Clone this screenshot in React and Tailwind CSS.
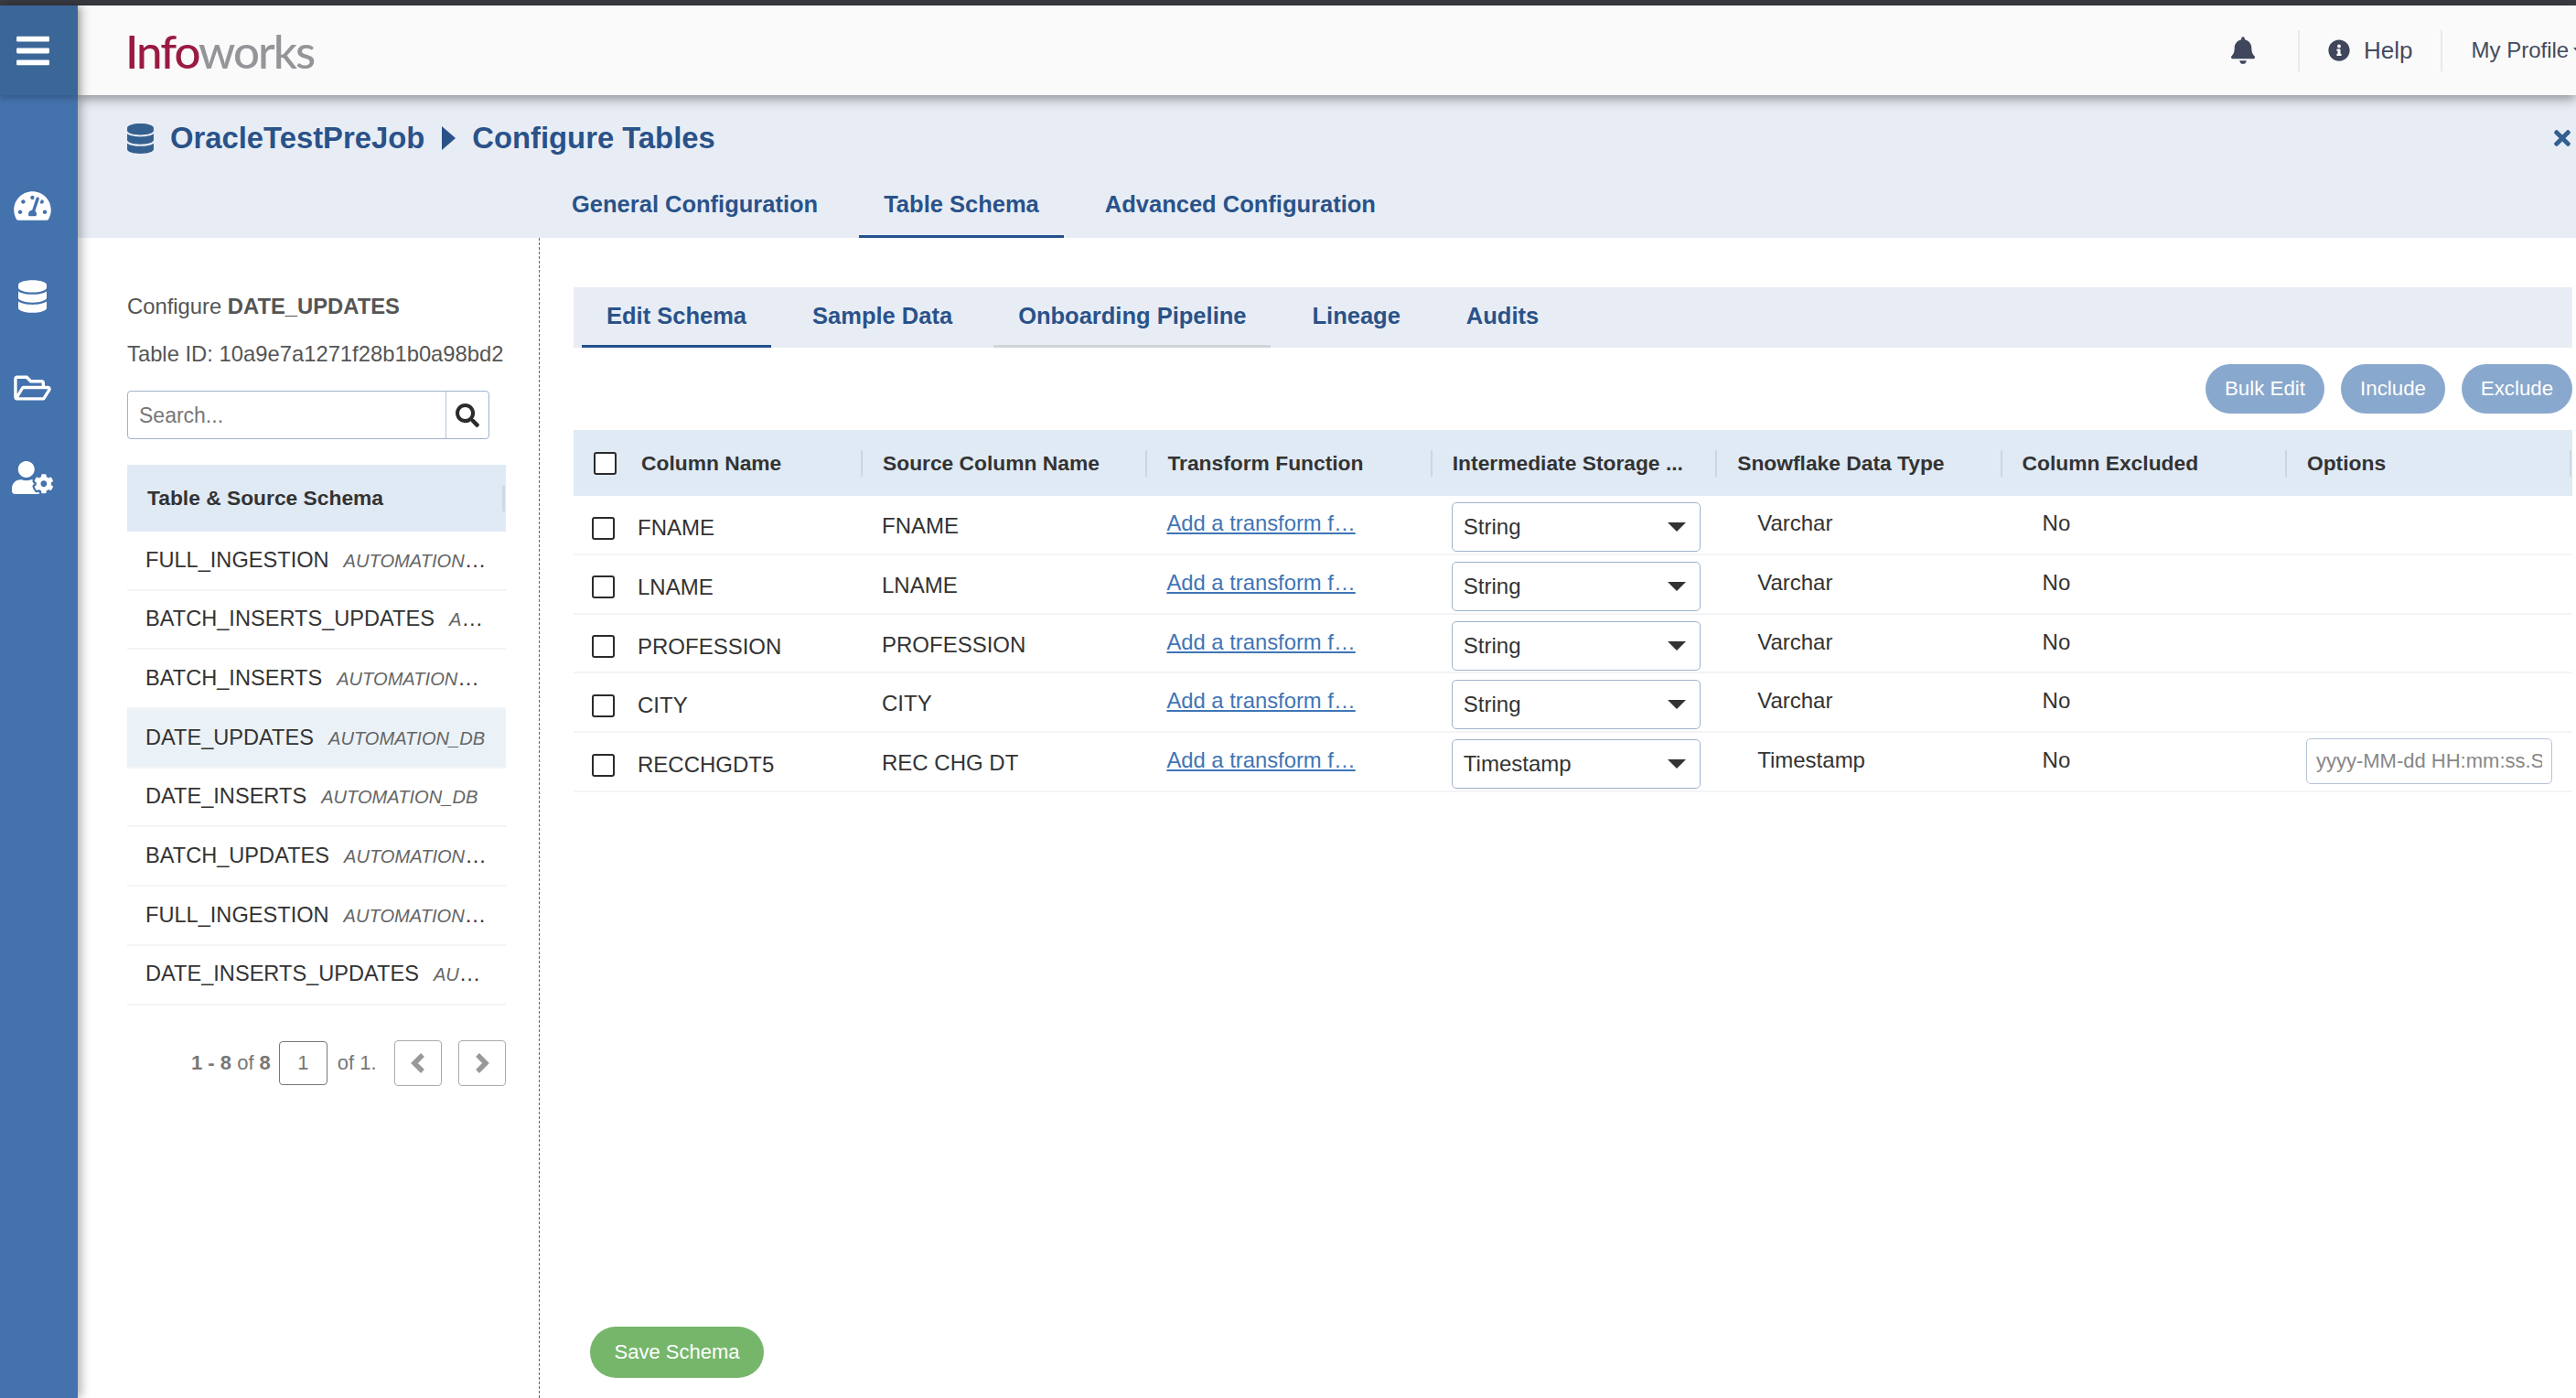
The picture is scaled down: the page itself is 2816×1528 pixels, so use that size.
import { FaBars, FaBell, FaDatabase, FaInfoCircle, FaRegFolderOpen, FaSearch, FaTachometerAlt, FaTimes, FaUserCog } from 'react-icons/fa';

const tables = [
  ['FULL_INGESTION'],
  ['BATCH_INSERTS_UPDATES'],
  ['BATCH_INSERTS'],
  ['DATE_UPDATES', true],
  ['DATE_INSERTS'],
  ['BATCH_UPDATES'],
  ['FULL_INGESTION'],
  ['DATE_INSERTS_UPDATES'],
];

const columns = ['Source Column Name', 'Transform Function', 'Intermediate Storage ...', 'Snowflake Data Type', 'Column Excluded', 'Options'];

const rows = [
  { name: 'FNAME', source: 'FNAME', storage: 'String', type: 'Varchar' },
  { name: 'LNAME', source: 'LNAME', storage: 'String', type: 'Varchar' },
  { name: 'PROFESSION', source: 'PROFESSION', storage: 'String', type: 'Varchar' },
  { name: 'CITY', source: 'CITY', storage: 'String', type: 'Varchar' },
  { name: 'RECCHGDT5', source: 'REC CHG DT', storage: 'Timestamp', type: 'Timestamp', options: true },
];

function Checkbox() {
  return <input type="checkbox" className="h-[25px] w-[25px] shrink-0 appearance-none rounded-[3px] border-2 border-[#2b2b2b] bg-white" />;
}

function PillButton({ children, className = '' }) {
  return (
    <button type="button" className={`flex h-[54px] items-center justify-center rounded-full bg-[#89a8cd] text-[22.3px] text-white ${className}`}>
      {children}
    </button>
  );
}

function PageTab({ children, active = false, muted = false }) {
  const line = active ? 'border-[#24508c]' : muted ? 'border-[#d0d3d8]' : 'border-transparent';
  return (
    <div className={`flex h-full items-center whitespace-nowrap border-b-[3px] px-[27px] pb-[1px] text-[25.5px] font-bold text-[#2a5289] ${line}`}>
      {children}
    </div>
  );
}

function PagerButton({ points }) {
  return (
    <div className="flex h-[50px] w-[52px] items-center justify-center rounded-[4px] border border-[#aaa]">
      <svg viewBox="0 0 16 24" className="h-[24px] w-[16px]">
        <polyline points={points} fill="none" stroke="#999" strokeWidth="5.5" />
      </svg>
    </div>
  );
}

function Sidebar() {
  return (
    <aside className="relative z-20 flex w-[85px] shrink-0 flex-col bg-[#4472ad] text-white shadow-[4px_0_10px_rgba(0,0,0,0.3)]">
      <div className="flex h-[98px] w-full items-center justify-center bg-[#3b6698] pr-[14px] shadow-[0_4px_6px_rgba(0,0,0,0.2)]">
        <FaBars className="h-[41px] w-[36px]" />
      </div>
      <div className="flex flex-col items-center pr-[14px]">
        <FaTachometerAlt className="mt-[103px] h-[36px] w-[41px]" />
        <FaDatabase className="mt-[63px] h-[36px] w-[31px]" />
        <FaRegFolderOpen className="mt-[64px] h-[36px] w-[41px]" />
        <FaUserCog className="mt-[62px] h-[36px] w-[45px]" />
      </div>
    </aside>
  );
}

function Header() {
  return (
    <header className="relative z-10 flex h-[98px] items-center bg-[#fafafa] shadow-[0_4px_12px_rgba(0,0,0,0.4)]">
      <div className="ml-[52px] font-['Lato',sans-serif] text-[51px] font-medium leading-none tracking-[-2px]">
        <span className="text-[#9a1b42]">Info</span>
        <span className="text-[#939598]">works</span>
      </div>
      <div className="flex-1" />
      <div className="flex w-[377px] shrink-0 items-center overflow-hidden text-[26px] text-[#444b5c]">
        <FaBell className="h-[30px] w-[26px] shrink-0 text-[#40465c]" />
        <div className="ml-[47px] h-[45px] w-[2px] shrink-0 bg-[#e8e8ee]" />
        <FaInfoCircle className="ml-[31px] h-[24px] w-[24px] shrink-0 text-[#40465c]" />
        <span className="ml-[15px] shrink-0">Help</span>
        <div className="ml-[31px] h-[45px] w-[2px] shrink-0 bg-[#e8e8ee]" />
        <span className="ml-[31px] shrink-0 whitespace-nowrap text-[24px]">My Profile</span>
        <svg viewBox="0 0 12 7" className="ml-[5px] h-[7px] w-[12px] shrink-0">
          <polygon points="0,0 12,0 6,7" fill="#444b5c" />
        </svg>
      </div>
    </header>
  );
}

function TableList() {
  return (
    <aside className="flex w-[505px] shrink-0 flex-col border-r border-dashed border-[#3f6c9e] pl-[54px] pr-[36px]">
      <div className="mt-[60px] text-[23.8px] leading-[30px] text-[#555]">
        Configure <b>DATE_UPDATES</b>
      </div>
      <div className="mt-[22px] whitespace-nowrap text-[23.8px] leading-[30px] text-[#555]">Table ID: 10a9e7a1271f28b1b0a98bd2</div>
      <div className="mt-[25px] flex h-[53px] w-[396px] rounded-[4px] border border-[#9fb3cc]">
        <input placeholder="Search..." className="min-w-0 flex-1 bg-transparent pl-[12px] pt-[2px] text-[23px] outline-none placeholder:text-[#777]" />
        <div className="flex w-[47px] items-center justify-center border-l border-[#b7c4d6]">
          <FaSearch className="h-[26px] w-[26px] text-[#2b2b2b]" />
        </div>
      </div>
      <div className="mt-[28px] flex h-[73px] items-center justify-between bg-[#e0eaf5] pl-[22px] pr-[1px] text-[22.8px] font-bold text-[#333]">
        Table &amp; Source Schema
        <div className="h-[28px] w-[3px] bg-[#cfd9e4]" />
      </div>
      {tables.map(([name, active], i) => (
        <div key={i} className={`flex h-[64.7px] items-center border-b-2 border-[#f3f4f6] pl-[20px] ${active ? 'bg-[#ebf2f7]' : ''}`}>
          <div className="w-[376px] truncate text-[23.6px] text-[#333]">
            {name}
            <i className="ml-[16px] text-[20.1px] text-[#666]">AUTOMATION_DB</i>
          </div>
        </div>
      ))}
      <div className="mt-[38px] flex items-center pl-[70px] text-[22px] text-[#777]">
        <span className="whitespace-nowrap">
          <b>1 - 8</b> of <b>8</b>
        </span>
        <div className="ml-[9px] flex h-[48px] w-[53px] items-center justify-center rounded-[4px] border border-[#777]">1</div>
        <span className="ml-[11px] whitespace-nowrap">of 1.</span>
        <div className="ml-[19px]">
          <PagerButton points="13,3 4,12 13,21" />
        </div>
        <div className="ml-[18px]">
          <PagerButton points="3,3 12,12 3,21" />
        </div>
      </div>
    </aside>
  );
}

function SchemaRow({ row }) {
  return (
    <div className="grid h-[64.8px] grid-cols-[316px_repeat(6,311.4px)] items-start border-b-2 border-[#f3f4f6] text-[24px] leading-[30px] text-[#333]">
      <div className="flex items-center pl-[20px] pt-[20px]">
        <Checkbox />
        <span className="ml-[25px]">{row.name}</span>
      </div>
      <div className="pl-[21px] pt-[18px]">{row.source}</div>
      <div className="pl-[21px] pt-[15px]">
        <a href="#" className="text-[23.8px] text-[#3f75b5] underline">
          Add a transform f…
        </a>
      </div>
      <div className="pl-[21px] pt-[7px]">
        <div className="flex h-[54px] w-[272px] items-center justify-between rounded-[5px] border border-[#9fb3cc] pl-[12px] pr-[15px]">
          {row.storage}
          <svg viewBox="0 0 20 10" className="h-[10px] w-[20px]">
            <polygon points="0,0 20,0 10,10" fill="#333" />
          </svg>
        </div>
      </div>
      <div className="pl-[44px] pt-[15px]">{row.type}</div>
      <div className="pl-[44px] pt-[15px]">No</div>
      <div className="pl-[21px] pt-[6px]">
        {row.options && (
          <input
            placeholder="yyyy-MM-dd HH:mm:ss.SSS"
            className="h-[50px] w-[269px] rounded-[5px] border border-[#b7c4d6] px-[10px] text-[22px] outline-none placeholder:text-[#888]"
          />
        )}
      </div>
    </div>
  );
}

function SchemaPanel() {
  return (
    <section className="flex min-w-0 flex-1 flex-col pl-[37px] pr-[4px]">
      <div className="mt-[54px] flex h-[66px] gap-[18px] bg-[#e8edf5] pl-[9px]">
        <PageTab active>Edit Schema</PageTab>
        <PageTab>Sample Data</PageTab>
        <PageTab muted>Onboarding Pipeline</PageTab>
        <PageTab>Lineage</PageTab>
        <PageTab>Audits</PageTab>
      </div>
      <div className="mt-[18px] flex justify-end gap-[18px]">
        <PillButton className="w-[130px]">Bulk Edit</PillButton>
        <PillButton className="w-[114px]">Include</PillButton>
        <PillButton className="w-[121px]">Exclude</PillButton>
      </div>
      <div className="mt-[18px] grid h-[72px] grid-cols-[316px_repeat(6,311.4px)] items-center bg-[#e0eaf5] text-[22.8px] font-bold text-[#333]">
        <div className="flex h-[29px] items-center border-r-2 border-[#ccd6e2] pl-[22px]">
          <Checkbox />
          <span className="ml-[27px]">Column Name</span>
        </div>
        {columns.map((col) => (
          <div key={col} className="flex h-[29px] items-center whitespace-nowrap border-r-2 border-[#ccd6e2] pl-[22px]">
            {col}
          </div>
        ))}
      </div>
      {rows.map((row) => (
        <SchemaRow key={row.name} row={row} />
      ))}
      <button type="button" className="mb-[22px] ml-[18px] mt-auto flex h-[56px] w-[190px] items-center justify-center rounded-full bg-[#76b66b] pb-[2px] text-[22px] text-white">
        Save Schema
      </button>
    </section>
  );
}

export default function App() {
  return (
    <div className="flex h-[1528px] w-[2816px] flex-col overflow-hidden bg-white font-['Liberation_Sans',Arial,sans-serif]">
      <div className="h-[6px] shrink-0 bg-[#3a3b40]" />
      <div className="flex min-h-0 flex-1">
        <Sidebar />
        <div className="flex min-w-0 flex-1 flex-col">
          <Header />
          <div className="flex h-[156px] shrink-0 flex-col bg-[#e8edf5]">
            <div className="flex items-center justify-between pl-[54px] pr-[4px] pt-[27px]">
              <div className="flex items-center text-[32.8px] font-bold leading-[40px] text-[#2a5289]">
                <FaDatabase className="h-[33px] w-[29px] text-[#33608f]" />
                <span className="ml-[18px]">OracleTestPreJob</span>
                <svg viewBox="0 0 15 26" className="ml-[19px] h-[26px] w-[15px]">
                  <polygon points="0,0 15,13 0,26" fill="#2a5289" />
                </svg>
                <span className="ml-[18px]">Configure Tables</span>
              </div>
              <FaTimes className="h-[26px] w-[22px] text-[#33608f]" />
            </div>
            <div className="ml-[513px] mt-auto flex h-[70px] gap-[18px]">
              <PageTab>General Configuration</PageTab>
              <PageTab active>Table Schema</PageTab>
              <PageTab>Advanced Configuration</PageTab>
            </div>
          </div>
          <div className="flex min-h-0 flex-1">
            <TableList />
            <SchemaPanel />
          </div>
        </div>
      </div>
    </div>
  );
}
